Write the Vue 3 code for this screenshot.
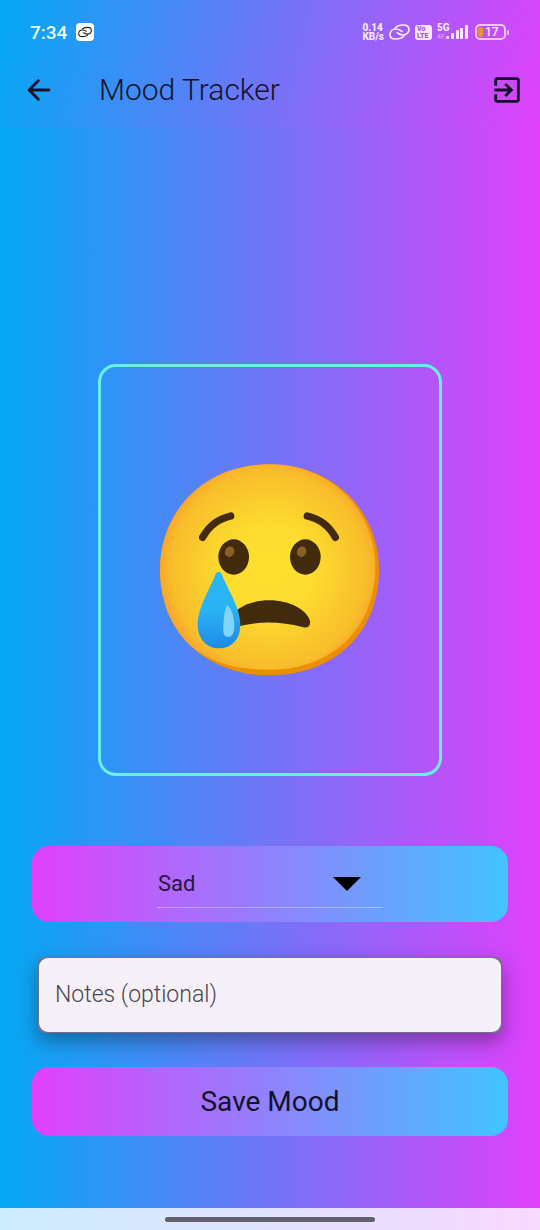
<script setup>
import { ref } from 'vue'

const moods = ['Happy', 'Sad', 'Angry', 'Calm']
const mood = ref('Sad')
const notes = ref('')
const linkPath =
  'M18 13C23 5 32 3 43 3C54 3 60 9 60 16C60 26 52 33 42 33C34 33 29 30 24 26M45 35C40 43 31 45 20 45C9 45 3 39 3 32C3 22 11 15 21 15C29 15 34 18 39 22'
</script>

<template>
  <div class="screen">
    <header class="top">
      <div class="status">
        <span class="clock">7:34</span>
        <span class="chip">
          <svg viewBox="0 0 63 48" width="14" height="12"><path :d="linkPath" fill="none" stroke="#222" stroke-width="5" /></svg>
        </span>
        <span class="rate"><span>0.14</span><span>KB/s</span></span>
        <svg class="link" viewBox="0 0 63 48" width="21" height="16"><path :d="linkPath" fill="none" stroke="#fbeaff" stroke-width="5" stroke-linecap="round" /></svg>
        <span class="volte"><span>Vo</span><span>LTE</span></span>
        <span class="signal">
          <span class="net"><span>5G</span><span class="faint">4F</span></span>
          <svg class="bars" viewBox="0 0 22 14" width="22" height="14" fill="#fbeaff">
            <rect x="0" y="11" width="3" height="3" rx="1" />
            <rect x="5" y="8" width="3" height="6" rx="1" />
            <rect x="10" y="5" width="3" height="9" rx="1" />
            <rect x="14" y="3" width="3" height="11" rx="1" />
            <rect x="19" y="0" width="3" height="14" rx="1" />
          </svg>
        </span>
        <span class="battery">
          <span class="cell"><span class="charge"></span>17</span>
          <span class="tip"></span>
        </span>
      </div>
      <div class="appbar">
        <button class="icon" type="button" aria-label="Back">
          <svg viewBox="0 0 24 24" width="34" height="34"><path d="M19 12H5M11.5 5.5L5 12l6.500 6.500" fill="none" stroke="currentColor" stroke-width="2" stroke-linecap="round" stroke-linejoin="round" /></svg>
        </button>
        <h1>Mood Tracker</h1>
        <button class="icon" type="button" aria-label="Log out">
          <svg viewBox="0 0 24 24" width="34" height="34" fill="currentColor"><path d="M10.090 15.590L11.500 17l5-5-5-5-1.410 1.410L12.670 11H3v2h9.670l-2.580 2.590zM19 3H5c-1.110 0-2 .9-2 2v4h2V5h14v14H5v-4H3v4c0 1.100.89 2 2 2h14c1.100 0 2-.9 2-2V5c0-1.100-.9-2-2-2z" /></svg>
        </button>
      </div>
    </header>

    <main>
      <div class="card">
        <svg viewBox="60 70 660 636" width="220" height="212" role="img" aria-label="Crying face">
          <defs>
            <radialGradient id="face" cx="388" cy="385" r="328" gradientUnits="userSpaceOnUse">
              <stop offset="0" stop-color="#fde030" />
              <stop offset=".4" stop-color="#fddc2e" />
              <stop offset=".9" stop-color="#f8bd2b" />
              <stop offset="1" stop-color="#f9a72b" />
            </radialGradient>
            <linearGradient id="tear" x1="225" y1="390" x2="240" y2="625" gradientUnits="userSpaceOnUse">
              <stop offset="0" stop-color="#29b6f6" />
              <stop offset=".5" stop-color="#29b3f5" />
              <stop offset="1" stop-color="#1e88e5" />
            </linearGradient>
          </defs>
          <path d="M388 71C585 71 717 215 717 386C717 580 580 704 388 704C196 704 60 575 60 386C60 215 190 71 388 71Z" fill="#eb8f00" />
          <path d="M388 71C575 71 706 210 706 378C706 565 575 687 388 687C290 687 215 668 155 618C92 562 60 480 60 386C60 215 190 71 388 71Z" fill="url(#face)" />
          <path d="M188 290Q216 239 272 226M502 226Q558 239 586 290" fill="none" stroke="#422b0d" stroke-width="22" stroke-linecap="round" />
          <ellipse cx="281" cy="349" rx="46" ry="53" fill="#422b0d" />
          <ellipse cx="496" cy="349" rx="46" ry="53" fill="#422b0d" />
          <ellipse cx="269" cy="333" rx="14" ry="16" transform="rotate(25 269 333)" fill="#896024" />
          <ellipse cx="485" cy="333" rx="14" ry="16" transform="rotate(25 485 333)" fill="#896024" />
          <path d="M265 545C278 502 330 479 388 479C450 479 501 508 510 541C512 557 502 564 487 559C420 541 350 541 290 559C273 564 262 559 265 545Z" fill="#422b0d" />
          <path d="M227 400Q236 387 245 400C259 440 301 498 301 552C301 598 272 623 237 623C201 623 173 595 173 552C173 500 212 441 227 400Z" fill="url(#tear)" />
          <path d="M262 494C275 504 283 530 283 557C282 580 276 589 264 589C252 588 248 578 250 556C251 532 255 498 262 494Z" fill="#81d4fa" />
        </svg>
      </div>

      <div class="panel picker">
        <div class="field">
          <select v-model="mood" aria-label="Mood">
            <option v-for="m in moods" :key="m">{{ m }}</option>
          </select>
          <svg class="caret" viewBox="0 0 28 14" width="28" height="14"><path d="M0 0h28L14 14z" /></svg>
        </div>
      </div>

      <div class="notes">
        <input v-model="notes" type="text" placeholder="Notes (optional)" aria-label="Notes (optional)" />
      </div>

      <button class="panel save" type="button">Save Mood</button>
    </main>

    <footer><span class="handle"></span></footer>
  </div>
</template>

<style>
body {
  margin: 0;
}
</style>

<style scoped>
.screen {
  display: flex;
  flex-direction: column;
  min-height: 100vh;
  background: linear-gradient(90deg, #03a9f4, #e040fb);
  font-family: Roboto, "Liberation Sans", sans-serif;
  color: #14112b;
}
.screen * {
  box-sizing: border-box;
}
.top {
  background: linear-gradient(103deg, #03a9f4, #e040fb);
}
.status {
  display: flex;
  align-items: center;
  height: 52px;
  padding: 12px 31px 0 30px;
  color: #fbeaff;
}
.clock {
  font-size: 19px;
  font-weight: 500;
  color: #e8fbff;
}
.chip {
  display: flex;
  align-items: center;
  justify-content: center;
  width: 18px;
  height: 18px;
  margin: 0 auto 0 9px;
  border-radius: 4px;
  background: #fff;
}
.rate {
  display: flex;
  flex-direction: column;
  font-size: 10px;
  line-height: 9px;
  font-weight: 800;
}
.link {
  margin-left: 5px;
}
.volte {
  display: flex;
  flex-direction: column;
  width: 17px;
  height: 15px;
  margin-left: 5px;
  padding: 1px 2px;
  border-radius: 3px;
  background: #fbeaff;
  color: #a74ff0;
  font-size: 7px;
  line-height: 7px;
  font-weight: 900;
}
.signal {
  display: flex;
  align-items: center;
  margin-left: 5px;
}
.net {
  display: flex;
  flex-direction: column;
  width: 14px;
  margin-right: -5px;
  font-size: 10px;
  line-height: 10px;
  font-weight: 800;
}
.faint {
  font-size: 7px;
  line-height: 8px;
  font-weight: 400;
  opacity: 0.6;
}
.bars {
  display: block;
}
.battery {
  display: flex;
  align-items: center;
  margin-left: 7px;
}
.cell {
  display: flex;
  align-items: center;
  gap: 2px;
  width: 31px;
  height: 16px;
  padding-left: 1px;
  border: 2px solid #f5c6ff;
  border-radius: 5px;
  font-size: 12px;
  line-height: 12px;
  font-weight: 500;
}
.charge {
  width: 5px;
  height: 10px;
  border-radius: 2px;
  background: #e8933f;
}
.tip {
  width: 2px;
  height: 5px;
  margin-left: 1px;
  border-radius: 1px;
  background: #f5c6ff;
}
.appbar {
  display: flex;
  align-items: center;
  height: 76px;
  padding: 0 16px 0 22px;
}
.icon {
  display: flex;
  padding: 0;
  border: 0;
  background: none;
  color: #14112b;
}
h1 {
  flex: 1;
  margin: 0 0 0 43px;
  font-size: 30px;
  line-height: 36px;
  font-weight: 300;
}
main {
  display: flex;
  flex: 1;
  flex-direction: column;
  padding: 236px 32px 72px;
}
.card {
  display: flex;
  align-items: center;
  justify-content: center;
  height: 412px;
  margin: 0 66px 70px;
  border: 3px solid #69f0e6;
  border-radius: 18px;
}
.panel {
  border: 0;
  border-radius: 17px;
  background: linear-gradient(90deg, #e040fb, #40c4ff);
}
.picker {
  display: flex;
  justify-content: center;
  height: 76px;
  padding: 14px 0;
}
.field {
  display: grid;
  align-items: center;
  width: 226px;
  padding-left: 1px;
  border-bottom: 1px solid rgba(255, 255, 255, 0.35);
}
.field > * {
  grid-area: 1 / 1;
}
select {
  height: 100%;
  padding: 0;
  border: 0;
  background: none;
  appearance: none;
  font: 400 22px/26px Roboto, sans-serif;
  color: #2a1440;
}
.caret {
  justify-self: end;
  margin-right: 22px;
  pointer-events: none;
}
.notes {
  display: flex;
  height: 76px;
  margin: 35px 6px 34px;
  padding: 1px;
  border-radius: 7px;
  background: #75708c;
  box-shadow: 0 8px 20px rgba(0, 0, 0, 0.35);
}
input {
  width: 100%;
  padding: 0 16px;
  border: 0;
  border-radius: 9px;
  background: #f6f1f9;
  font: 300 23px/28px Roboto, sans-serif;
  color: #2a2730;
}
input::placeholder {
  color: #49454f;
  opacity: 1;
}
.save {
  height: 69px;
  font: 400 28px/32px Roboto, sans-serif;
  color: #14112b;
}
footer {
  display: flex;
  align-items: center;
  justify-content: center;
  height: 22px;
  background: rgba(255, 255, 255, 0.8);
}
.handle {
  width: 210px;
  height: 5px;
  border-radius: 3px;
  background: #62606e;
}
</style>
